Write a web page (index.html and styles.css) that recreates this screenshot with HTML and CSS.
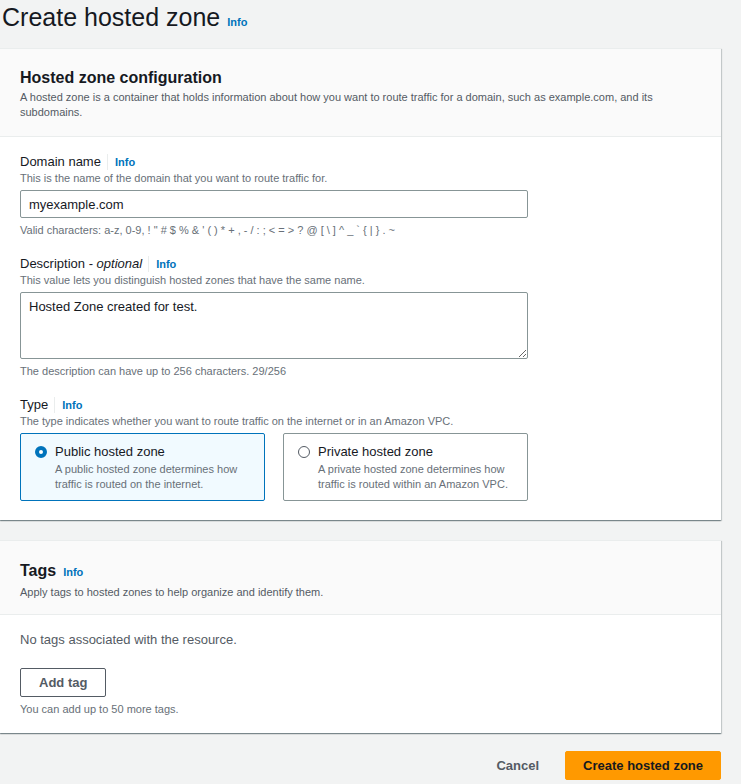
FILE: index.html
```html
<!DOCTYPE html>
<html lang="en">
<head>
<meta charset="utf-8">
<title>Create hosted zone</title>
<link rel="stylesheet" href="styles.css">
</head>
<body>
<div class="page">
  <div class="page-head">
    <h1 class="page-title">Create hosted zone</h1>
    <a class="info">Info</a>
  </div>

  <section class="container">
    <header class="container-head">
      <h2 class="container-title">Hosted zone configuration</h2>
      <p class="container-desc">A hosted zone is a container that holds information about how you want to route traffic for a domain, such as example.com, and its subdomains.</p>
    </header>
    <div class="container-body">
      <div class="field">
        <div class="label-row"><span class="label">Domain name</span><span class="sep"></span><a class="info">Info</a></div>
        <div class="hint">This is the name of the domain that you want to route traffic for.</div>
        <input class="input" type="text" value="myexample.com">
        <div class="hint after">Valid characters: a-z, 0-9, ! " # $ % &amp; ' ( ) * + , - / : ; &lt; = &gt; ? @ [ \ ] ^ _ ` { | } . ~</div>
      </div>

      <div class="field">
        <div class="label-row"><span class="label">Description - <i>optional</i></span><span class="sep"></span><a class="info">Info</a></div>
        <div class="hint">This value lets you distinguish hosted zones that have the same name.</div>
        <textarea class="textarea">Hosted Zone created for test.</textarea>
        <div class="hint after">The description can have up to 256 characters. 29/256</div>
      </div>

      <div class="field">
        <div class="label-row"><span class="label">Type</span><span class="sep"></span><a class="info">Info</a></div>
        <div class="hint">The type indicates whether you want to route traffic on the internet or in an Amazon VPC.</div>
        <div class="tiles">
          <div class="tile selected">
            <span class="radio on"></span>
            <div class="tile-text">
              <div class="tile-label">Public hosted zone</div>
              <div class="tile-desc">A public hosted zone determines how traffic is routed on the internet.</div>
            </div>
          </div>
          <div class="tile">
            <span class="radio"></span>
            <div class="tile-text">
              <div class="tile-label">Private hosted zone</div>
              <div class="tile-desc">A private hosted zone determines how traffic is routed within an Amazon VPC.</div>
            </div>
          </div>
        </div>
      </div>
    </div>
  </section>

  <section class="container tags">
    <header class="container-head">
      <div class="title-row"><h2 class="container-title">Tags</h2><a class="info">Info</a></div>
      <p class="container-desc">Apply tags to hosted zones to help organize and identify them.</p>
    </header>
    <div class="container-body tags-body">
      <div class="empty">No tags associated with the resource.</div>
      <button class="btn-normal">Add tag</button>
      <div class="hint after">You can add up to 50 more tags.</div>
    </div>
  </section>

  <div class="actions">
    <button class="btn-link">Cancel</button>
    <button class="btn-primary">Create hosted zone</button>
  </div>
</div>
</body>
</html>
```

FILE: styles.css
```css
* { box-sizing: border-box; }
html, body { margin: 0; padding: 0; }
body {
  background: #f2f3f3;
  font-family: "Liberation Sans", Arial, sans-serif;
  color: #16191f;
  font-size: 13px;
}
.page {
  width: 721px;
}
.page-head {
  display: flex;
  align-items: baseline;
  gap: 7px;
  padding: 0 0 0 2px;
  height: 48px;
}
.page-title {
  margin: 0;
  font-size: 25px;
  font-weight: 400;
  line-height: 34px;
  color: #16191f;
}
.info {
  color: #0073bb;
  font-size: 11px;
  font-weight: 700;
  line-height: 15px;
  cursor: pointer;
}
.container {
  background: #fff;
  border-top: 1px solid #eaeded;
  box-shadow: 0 1px 1px 0 rgba(0,28,36,.3), 1px 1px 1px 0 rgba(0,28,36,.15), -1px 1px 1px 0 rgba(0,28,36,.15);
}
.container-head {
  background: #fafafa;
  border-bottom: 1px solid #eaeded;
  padding: 18px 20px 16px;
}
.container-title {
  margin: 0;
  font-size: 16px;
  font-weight: 700;
  line-height: 22px;
}
.container-desc {
  margin: 1px 0 0;
  font-size: 11px;
  line-height: 15px;
  color: #545b64;
}
.container-body {
  padding: 16px 20px 19px;
  display: flex;
  flex-direction: column;
  gap: 17px;
}
.field { display: flex; flex-direction: column; }
.label-row {
  display: flex;
  align-items: center;
  height: 18px;
}
.label { font-size: 13px; line-height: 18px; }
.sep {
  width: 1px;
  height: 16px;
  background: #eaeded;
  margin: 0 7px 0 6px;
}
.hint {
  font-size: 11px;
  line-height: 15px;
  color: #687078;
}
.hint.after { margin-top: 5px; }
.input {
  margin-top: 4px;
  width: 508px;
  height: 28px;
  border: 1px solid #879596;
  border-radius: 2px;
  padding: 4px 8px;
  font-family: inherit;
  font-size: 13px;
  color: #16191f;
  background: #fff;
}
.textarea {
  display: block;
  margin-top: 4px;
  width: 508px;
  height: 67px;
  border: 1px solid #879596;
  border-radius: 2px;
  padding: 5px 8px;
  font-family: inherit;
  font-size: 13px;
  line-height: 18px;
  color: #16191f;
  resize: vertical;
}
.tiles {
  display: flex;
  gap: 18px;
  margin-top: 4px;
}
.tile {
  width: 245px;
  height: 68px;
  border: 1px solid #879596;
  border-radius: 2px;
  background: #fff;
  display: flex;
  gap: 8px;
  padding: 9px 14px 8px 14px;
}
.tile.selected {
  background: #f1faff;
  border-color: #0073bb;
}
.radio {
  flex: none;
  width: 12px;
  height: 12px;
  margin-top: 3px;
  border-radius: 50%;
  border: 1px solid #545b64;
  background: #fff;
}
.radio.on {
  border: 4px solid #0073bb;
}
.tile-label { font-size: 13px; line-height: 18px; }
.tile-desc {
  font-size: 11px;
  line-height: 15px;
  color: #687078;
  margin-top: 1px;
}
.tags { margin-top: 20px; }
.tags .container-head { padding-top: 19px; padding-bottom: 14px; }
.title-row { display: flex; align-items: baseline; gap: 7px; }
.tags .container-desc { margin-top: 3px; }
.tags-body { gap: 0; padding: 16px 20px 16px; }
.empty {
  font-size: 13px;
  line-height: 18px;
  color: #545b64;
}
.btn-normal {
  align-self: flex-start;
  margin-top: 19px;
  height: 29px;
  padding: 0 18px;
  border: 1px solid #545b64;
  border-radius: 2px;
  background: #fff;
  color: #545b64;
  font-family: inherit;
  font-size: 13px;
  font-weight: 700;
}
.actions {
  display: flex;
  justify-content: flex-end;
  align-items: center;
  gap: 8px;
  padding-top: 18px;
}
.btn-link, .btn-primary {
  height: 29px;
  padding: 0 17px;
  border: 1px solid transparent;
  border-radius: 2px;
  font-family: inherit;
  font-size: 13px;
  font-weight: 700;
}
.btn-link {
  background: transparent;
  color: #545b64;
}
.btn-primary {
  background: #ff9900;
  border-color: #ff9900;
  color: #16191f;
}
```
